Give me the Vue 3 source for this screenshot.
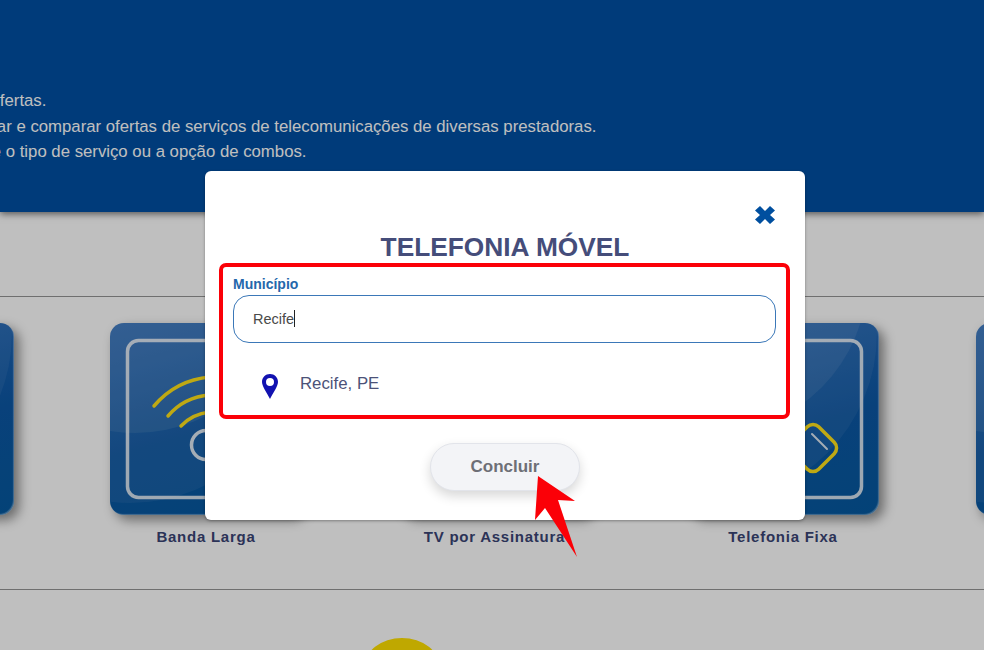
<script setup>
const cards = [
  { id: 'a', label: 'Internet', icon: 'none' },
  { id: 'b', label: 'Banda Larga', icon: 'wifi' },
  { id: 'c', label: 'TV por Assinatura', icon: 'none' },
  { id: 'd', label: 'Telefonia Fixa', icon: 'phone' },
  { id: 'e', label: 'Combos', icon: 'none' }
]
</script>

<template>
  <div class="page">
    <header class="hero">
      <p class="line line-1">Compare ofertas.</p>
      <p class="line line-2">Aqui você pode pesquisar e comparar ofertas de serviços de telecomunicações de diversas prestadoras.</p>
      <p class="line line-3">Selecione o tipo de serviço ou a opção de combos.</p>
    </header>

    <div class="spacer"></div>

    <section class="services">
      <div v-for="c in cards" :key="c.id" class="service">
        <div class="tile">
          <svg class="art" viewBox="0 0 192 192" width="192" height="192">
            <circle cx="25" cy="-45" r="155" fill="#fff" fill-opacity=".08" />
            <ellipse cx="20" cy="10" rx="170" ry="170" fill="#fff" fill-opacity=".06" />
            <rect x="17.500" y="17.500" width="157" height="157" rx="11" fill="none" stroke="#fff" stroke-opacity=".82" stroke-width="3.500" />
            <g v-if="c.icon === 'wifi'" fill="none" stroke-linecap="round">
              <g stroke="#ffe21a" stroke-width="3.500">
                <path d="M44 83 Q66 57 100 54" />
                <path d="M58 93 Q74 74 100 72" />
                <path d="M71 103 Q82 91 100 89" />
              </g>
              <circle cx="96" cy="122" r="14.500" stroke="#fff" stroke-opacity=".85" stroke-width="3.500" />
            </g>
            <g v-if="c.icon === 'phone'" fill="none" stroke-linecap="round">
              <rect x="107" y="106" width="38" height="38" rx="8" stroke="#ffe21a" stroke-width="3.500" transform="rotate(45 126 125)" />
              <path d="M125 111 L140 126" stroke="#fff" stroke-opacity=".85" stroke-width="2" />
            </g>
          </svg>
        </div>
        <div class="name">{{ c.label }}</div>
      </div>
    </section>

    <div class="mascot"></div>

    <div class="overlay"></div>

    <div class="modal">
      <svg class="close" viewBox="0 0 20 18" width="20" height="18">
        <path d="M5 0 L10 5 L15 0 L20 4.500 L15 9 L20 13.500 L15 18 L10 13 L5 18 L0 13.500 L5 9 L0 4.500 Z" fill="#004f9f" />
      </svg>
      <h2 class="title">TELEFONIA MÓVEL</h2>
      <div class="mark">
        <label class="field-label">Município</label>
        <div class="input"><span>Recife</span><i class="caret"></i></div>
        <div class="option">
          <svg class="pin" viewBox="0 0 16 25" width="16" height="25">
            <path fill-rule="evenodd" d="M8 0 C3.500 0 0 3.500 0 8 C0 12.500 5.500 20 8 25 C10.500 20 16 12.500 16 8 C16 3.500 12.500 0 8 0 Z M8 4 A4 4 0 1 1 8 12 A4 4 0 1 1 8 4 Z" fill="#1212b0" />
          </svg>
          <span class="place">Recife, PE</span>
        </div>
      </div>
      <button class="done" type="button">Concluir</button>
      <svg class="arrow" viewBox="0 0 50 90" width="50" height="90">
        <path d="M8 0 L45 25 L28 24 L47 81 L15 32 L5 44 Z" fill="#fb0007" />
      </svg>
    </div>
  </div>
</template>

<style scoped>
.page {
  position: relative;
  width: 984px;
  height: 650px;
  overflow: hidden;
  background: #fff;
  font-family: "Liberation Sans", Arial, sans-serif;
}
.hero {
  height: 212px;
  box-sizing: border-box;
  padding-top: 88px;
  background: #004fa3;
  box-shadow: 0 2px 7px rgba(0, 0, 0, .55);
  color: #fff;
  font-size: 16.750px;
  line-height: 25.500px;
  position: relative;
}
.line { margin: 0; white-space: nowrap; }
.line-1 { margin-left: -83px; }
.line-2 { margin-left: -181px; }
.line-3 { margin-left: -72.500px; }
.spacer {
  height: 84px;
  border-bottom: 1px solid #959595;
}
.services {
  display: flex;
  gap: 96.500px;
  margin-left: -178.500px;
  padding-top: 26px;
  height: 293px;
  box-sizing: border-box;
  border-bottom: 1px solid #959595;
  width: 1340px;
}
.service {
  flex: none;
  width: 192px;
  text-align: center;
}
.tile {
  width: 192px;
  height: 192px;
  border-radius: 14px;
  background: linear-gradient(165deg, #2a6cbc 0%, #0c57a4 55%, #05599f 100%);
  box-shadow: 5px 5px 12px rgba(0, 0, 0, .45), inset -1px -1px 1px rgba(255, 255, 255, .35);
  overflow: hidden;
}
.art { display: block; }
.name {
  margin-top: 13px;
  font-size: 15px;
  line-height: 18px;
  font-weight: 700;
  color: #3a4475;
  letter-spacing: .75px;
}
.mascot {
  width: 76px;
  height: 60px;
  margin: 48px 0 0 364px;
  border-radius: 50%;
  background: #ffe000;
}
.overlay {
  position: absolute;
  inset: 0;
  background: rgba(0, 0, 0, .25);
}
.modal {
  position: absolute;
  left: 205px;
  top: 171px;
  width: 600px;
  height: 349px;
  box-sizing: border-box;
  padding-top: 35px;
  display: flex;
  flex-direction: column;
  align-items: center;
  background: #fff;
  border-radius: 6px;
  box-shadow: 0 1px 3px rgba(0, 0, 0, .35);
}
.close {
  align-self: flex-end;
  margin-right: 30px;
  flex: none;
}
.title {
  margin: 8px 0 0;
  font-size: 26.300px;
  line-height: 30px;
  font-weight: 700;
  color: #454d7a;
}
.mark {
  align-self: flex-start;
  width: 571px;
  height: 156px;
  margin: 1px 0 0 14px;
  box-sizing: border-box;
  padding: 9px 10px 0;
  border: 4.500px solid #fb0007;
  border-radius: 7px;
}
.field-label {
  display: block;
  font-size: 14px;
  line-height: 16px;
  font-weight: 700;
  color: #2467ab;
}
.input {
  display: flex;
  align-items: center;
  margin-top: 2.500px;
  height: 48px;
  box-sizing: border-box;
  padding-left: 19px;
  border: 1px solid #3b78b8;
  border-radius: 16px;
  font-size: 14.500px;
  color: #4a4a4a;
}
.caret {
  width: 1px;
  height: 17px;
  background: #222;
}
.option {
  display: flex;
  align-items: flex-start;
  gap: 22px;
  margin-top: 31.500px;
  padding-left: 29px;
  font-size: 16.800px;
  color: #4c5278;
}
.place { line-height: 20px; }
.pin { flex: none; }
.done {
  width: 150px;
  height: 48px;
  margin-top: 24px;
  border: 1px solid #e2e4ea;
  border-radius: 24px;
  background: #f3f4f7;
  box-shadow: 0 5px 12px rgba(0, 0, 0, .16);
  font-family: inherit;
  font-size: 17px;
  font-weight: 700;
  color: #6d6f76;
}
.arrow {
  position: absolute;
  left: 325px;
  top: 305px;
  overflow: visible;
}
</style>
